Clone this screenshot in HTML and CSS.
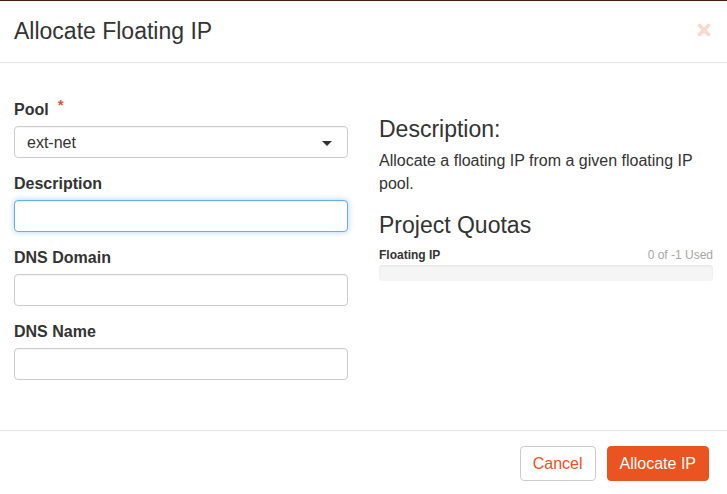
FILE: index.html
```html
<!DOCTYPE html>
<html lang="en">
<head>
<meta charset="utf-8">
<title>Allocate Floating IP</title>
<link rel="stylesheet" href="styles.css">
</head>
<body>
<div class="modal">
  <div class="modal-header">
    <h4 class="modal-title">Allocate Floating IP</h4>
    <button class="close" type="button" aria-label="Close">
      <svg width="14" height="14" viewBox="0 0 14 14"><path d="M2.5 2.5 L11.5 11.5 M11.5 2.5 L2.5 11.5" stroke="#fbd8cb" stroke-width="3.6" stroke-linecap="round" fill="none"/></svg>
    </button>
  </div>
  <div class="modal-body">
    <div class="col-left">
      <div class="form-group">
        <label class="control-label">Pool <span class="required">*</span></label>
        <div class="select">
          <span class="select-value">ext-net</span>
          <span class="caret"></span>
        </div>
      </div>
      <div class="form-group">
        <label class="control-label">Description</label>
        <input class="form-control focused" type="text">
      </div>
      <div class="form-group">
        <label class="control-label">DNS Domain</label>
        <input class="form-control" type="text">
      </div>
      <div class="form-group">
        <label class="control-label">DNS Name</label>
        <input class="form-control" type="text">
      </div>
    </div>
    <div class="col-right">
      <h3 class="help-title">Description:</h3>
      <p class="help-text">Allocate a floating IP from a given floating IP pool.</p>
      <h3 class="quota-title">Project Quotas</h3>
      <div class="quota-row">
        <strong class="quota-name">Floating IP</strong>
        <span class="quota-used">0 of -1 Used</span>
      </div>
      <div class="progress"></div>
    </div>
  </div>
  <div class="modal-footer">
    <button class="btn btn-default" type="button">Cancel</button>
    <button class="btn btn-primary" type="button">Allocate IP</button>
  </div>
</div>
</body>
</html>
```
FILE: styles.css
```css
* { box-sizing: border-box; }

html, body {
  margin: 0;
  padding: 0;
  background: #ffffff;
}

body {
  font-family: "Liberation Sans", Arial, sans-serif;
  font-size: 16px;
  line-height: 1.42857;
  color: #333333;
}

.modal {
  width: 727px;
  height: 494px;
  border-top: 1px solid #4e1e0c;
  background: #ffffff;
  display: flex;
  flex-direction: column;
}

.modal-header {
  height: 62px;
  border-bottom: 1px solid #e5e5e5;
  display: flex;
  align-items: center;
  justify-content: space-between;
  padding: 0 16px 0 14px;
  flex: none;
}

.modal-title {
  margin: 0;
  font-size: 23px;
  font-weight: normal;
  line-height: 1.1;
  color: #333333;
  padding-top: 1px;
}

.close {
  border: 0;
  background: none;
  padding: 0;
  margin: 0 0 4px 0;
  width: 14px;
  height: 14px;
  display: block;
  cursor: pointer;
}

.close svg { display: block; }

.modal-body {
  flex: 1;
  padding: 31px 14px 0 14px;
  display: grid;
  grid-template-columns: 334px 334px;
  column-gap: 31px;
  align-content: start;
}

.form-group {
  margin-bottom: 14px;
}

.control-label {
  display: block;
  font-weight: bold;
  line-height: 23px;
  margin-bottom: 5px;
}

.required {
  color: #e9482a;
  font-size: 14px;
  margin-left: 5px;
  vertical-align: 5px;
}

.select,
.form-control {
  display: flex;
  align-items: center;
  width: 334px;
  height: 32px;
  border: 1px solid #cccccc;
  border-radius: 4px;
  background: #ffffff;
  padding: 0 12px;
  font: inherit;
  color: #333333;
  box-shadow: inset 0 1px 1px rgba(0, 0, 0, 0.04);
  margin: 0;
}

.select {
  justify-content: space-between;
  padding-right: 15px;
}

.select-value {
  line-height: 1;
  padding-top: 2px;
}

.caret {
  width: 0;
  height: 0;
  border-left: 5px solid transparent;
  border-right: 5px solid transparent;
  border-top: 5px solid #333333;
  margin-top: 2px;
}

.form-control.focused {
  border-color: #66afe9;
  outline: 0;
  box-shadow: inset 0 1px 1px rgba(0, 0, 0, 0.075), 0 0 6px rgba(102, 175, 233, 0.55);
}

.help-title,
.quota-title {
  font-size: 23px;
  font-weight: normal;
  line-height: 1.1;
  color: #333333;
  margin: 0;
}

.help-title {
  margin-top: 23px;
}

.help-text {
  margin: 8px 0 0 0;
}

.quota-title {
  margin-top: 17px;
}

.quota-row {
  display: flex;
  justify-content: space-between;
  align-items: baseline;
  font-size: 12px;
  line-height: 16px;
  margin-top: 9px;
}

.quota-name {
  font-weight: bold;
  color: #333333;
}

.quota-used {
  color: #a6a6a6;
}

.progress {
  margin-top: 2px;
  height: 16px;
  background: #f5f5f5;
  border-radius: 4px;
  box-shadow: inset 0 1px 2px rgba(0, 0, 0, 0.08);
}

.modal-footer {
  flex: none;
  height: 64px;
  border-top: 1px solid #e5e5e5;
  display: flex;
  justify-content: flex-end;
  align-items: flex-start;
  gap: 11px;
  padding: 15px 18px 0 0;
}

.btn {
  font: inherit;
  line-height: 23px;
  padding: 5px 12px;
  border-radius: 4px;
  border: 1px solid transparent;
  cursor: pointer;
  margin: 0;
}

.btn-default {
  background: #ffffff;
  border-color: #cccccc;
  color: #e95420;
}

.btn-primary {
  background: #e95420;
  border-color: #e95420;
  color: #ffffff;
}
```
